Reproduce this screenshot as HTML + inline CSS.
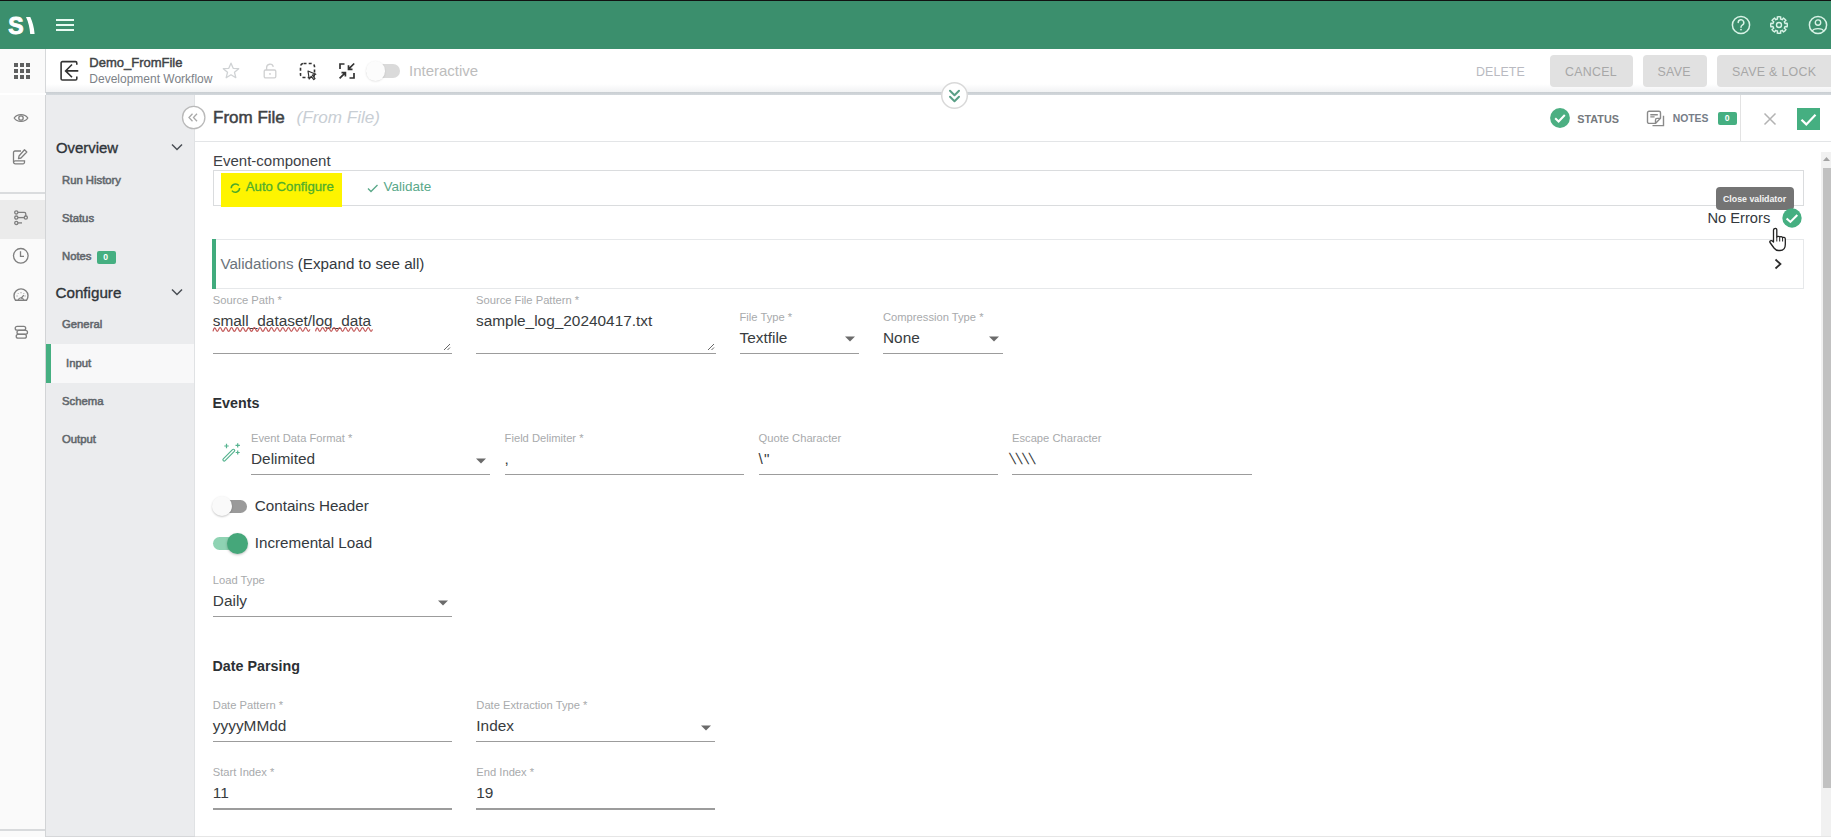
<!DOCTYPE html>
<html><head><meta charset="utf-8"><style>
html,body{margin:0;padding:0;width:1831px;height:837px;overflow:hidden;background:#fff;position:relative;}
.t{position:absolute;white-space:nowrap;line-height:1;font-family:"Liberation Sans",sans-serif;}
svg{overflow:visible}
</style></head><body>
<div style="position:absolute;left:0px;top:0px;width:1831px;height:49px;background:#3b8f6d"></div>
<div style="position:absolute;left:0px;top:0px;width:1831px;height:1.3px;background:#111"></div>
<div class="t" style="left:8.3px;top:14.53px;font-size:23px;color:#fff;font-weight:bold;font-style:normal;-webkit-text-stroke:0.9px #fff">S</div>
<svg style="position:absolute;left:24px;top:16px;" width="12" height="19" viewBox="0 0 12 19"><path d="M2 1 L6.3 1 C8.5 6 10 11 10.6 18 L6.2 18 C5.8 12 4.5 6 2 1 Z" fill="#fff"/></svg>
<div style="position:absolute;left:56px;top:19px;width:18px;height:2px;background:#e8fbf3"></div>
<div style="position:absolute;left:56px;top:24px;width:18px;height:2px;background:#e8fbf3"></div>
<div style="position:absolute;left:56px;top:29px;width:18px;height:2px;background:#e8fbf3"></div>
<svg style="position:absolute;left:1731px;top:15px;" width="20" height="20" viewBox="0 0 20 20"><circle cx="10" cy="10" r="8.6" fill="none" stroke="#d8f3e6" stroke-width="1.5"/><path d="M7.2 7.6 a2.8 2.8 0 1 1 4 2.5 c-0.9 0.5 -1.2 1 -1.2 2.2" fill="none" stroke="#d8f3e6" stroke-width="1.5" stroke-linecap="round"/><circle cx="10" cy="14.6" r="0.9" fill="#d8f3e6"/></svg>
<svg style="position:absolute;left:1769px;top:15px;transform:rotate(-90deg)" width="20" height="20" viewBox="0 0 20 20"><path d="M18.12 8.27 A8.3 8.3 0 0 1 18.12 11.73 L16.03 11.45 A6.2 6.2 0 0 1 15.29 13.24 L16.96 14.52 A8.3 8.3 0 0 1 14.52 16.96 L13.24 15.29 A6.2 6.2 0 0 1 11.45 16.03 L11.73 18.12 A8.3 8.3 0 0 1 8.27 18.12 L8.55 16.03 A6.2 6.2 0 0 1 6.76 15.29 L5.48 16.96 A8.3 8.3 0 0 1 3.04 14.52 L4.71 13.24 A6.2 6.2 0 0 1 3.97 11.45 L1.88 11.73 A8.3 8.3 0 0 1 1.88 8.27 L3.97 8.55 A6.2 6.2 0 0 1 4.71 6.76 L3.04 5.48 A8.3 8.3 0 0 1 5.48 3.04 L6.76 4.71 A6.2 6.2 0 0 1 8.55 3.97 L8.27 1.88 A8.3 8.3 0 0 1 11.73 1.88 L11.45 3.97 A6.2 6.2 0 0 1 13.24 4.71 L14.52 3.04 A8.3 8.3 0 0 1 16.96 5.48 L15.29 6.76 A6.2 6.2 0 0 1 16.03 8.55 Z" fill="none" stroke="#d8f3e6" stroke-width="1.4" stroke-linejoin="round"/><circle cx="10" cy="10" r="2.5" fill="none" stroke="#d8f3e6" stroke-width="1.4"/></svg>
<svg style="position:absolute;left:1808px;top:15px;" width="20" height="20" viewBox="0 0 20 20"><circle cx="10" cy="10" r="8.6" fill="none" stroke="#d8f3e6" stroke-width="1.5"/><circle cx="10" cy="7.6" r="2.7" fill="none" stroke="#d8f3e6" stroke-width="1.4"/><path d="M4.2 16.2 C5.5 12.8 14.5 12.8 15.8 16.2" fill="none" stroke="#d8f3e6" stroke-width="1.4"/></svg>
<div style="position:absolute;left:0px;top:49px;width:1831px;height:44px;background:#fff"></div>
<div style="position:absolute;left:46px;top:84px;width:1785px;height:8px;background:linear-gradient(#fff,#f1f2f3)"></div>
<div style="position:absolute;left:46px;top:92px;width:1785px;height:2.6px;background:linear-gradient(#c9ced2,#d3d8dc)"></div>
<div style="position:absolute;left:0px;top:92px;width:45px;height:1.3px;background:#d4d7da"></div>
<div style="position:absolute;left:0px;top:49px;width:45px;height:44px;background:#fafafa"></div>
<div style="position:absolute;left:45px;top:49px;width:1px;height:44px;background:#d6d8da"></div>
<div style="position:absolute;left:14px;top:63px;width:4px;height:4px;background:#5f6060"></div>
<div style="position:absolute;left:20px;top:63px;width:4px;height:4px;background:#5f6060"></div>
<div style="position:absolute;left:26px;top:63px;width:4px;height:4px;background:#5f6060"></div>
<div style="position:absolute;left:14px;top:69px;width:4px;height:4px;background:#5f6060"></div>
<div style="position:absolute;left:20px;top:69px;width:4px;height:4px;background:#5f6060"></div>
<div style="position:absolute;left:26px;top:69px;width:4px;height:4px;background:#5f6060"></div>
<div style="position:absolute;left:14px;top:75px;width:4px;height:4px;background:#5f6060"></div>
<div style="position:absolute;left:20px;top:75px;width:4px;height:4px;background:#5f6060"></div>
<div style="position:absolute;left:26px;top:75px;width:4px;height:4px;background:#5f6060"></div>
<svg style="position:absolute;left:59px;top:60px;" width="22" height="22" viewBox="0 0 22 22"><path d="M17.8 4.8 V2.9 a1.3 1.3 0 0 0 -1.3 -1.3 H3.4 a1.3 1.3 0 0 0 -1.3 1.3 V18.7 a1.3 1.3 0 0 0 1.3 1.3 H16.5 a1.3 1.3 0 0 0 1.3 -1.3 V16.4" fill="none" stroke="#333" stroke-width="1.6"/><path d="M19.3 10.9 H6.6 M13 4.5 L6.6 10.9 L13 17.3" fill="none" stroke="#333" stroke-width="1.6"/></svg>
<div class="t" style="left:89.3px;top:55.99px;font-size:13.0px;color:#3f4346;font-weight:normal;font-style:normal;-webkit-text-stroke:0.45px #3f4346">Demo_FromFile</div>
<div class="t" style="left:89.3px;top:72.54px;font-size:12.0px;color:#7d8288;font-weight:normal;font-style:normal;">Development Workflow</div>
<svg style="position:absolute;left:222px;top:62px;" width="18" height="17" viewBox="0 0 18 17"><path d="M9 1.2 L11.2 6.3 L16.7 6.7 L12.5 10.3 L13.8 15.7 L9 12.8 L4.2 15.7 L5.5 10.3 L1.3 6.7 L6.8 6.3 Z" fill="none" stroke="#cfd2d4" stroke-width="1.3" stroke-linejoin="round"/></svg>
<svg style="position:absolute;left:263px;top:63px;" width="15" height="16" viewBox="0 0 15 16"><rect x="1.2" y="7" width="11.6" height="7.8" rx="1.3" fill="none" stroke="#cfd0d1" stroke-width="1.3"/><path d="M3.6 7 V4.6 a3.4 3.4 0 0 1 6.7 -0.8" fill="none" stroke="#cfd0d1" stroke-width="1.3"/><circle cx="7" cy="10.9" r="0.9" fill="#cfd0d1"/></svg>
<svg style="position:absolute;left:298px;top:61px;" width="20" height="20" viewBox="0 0 20 20"><rect x="2.5" y="2.5" width="14" height="14" rx="3" fill="none" stroke="#333" stroke-width="1.6" stroke-dasharray="3 2.2"/><path d="M10 10 L17.8 13.2 L14.4 14.2 L17 17.6 L15.8 18.6 L13.2 15.3 L11.2 18 Z" fill="#fff" stroke="#333" stroke-width="1.2" stroke-linejoin="round"/></svg>
<svg style="position:absolute;left:338px;top:62px;" width="18" height="18" viewBox="0 0 18 18"><path d="M2 7 V2 H6.5 M11.5 16 H16 V11" fill="none" stroke="#333" stroke-width="1.7"/><path d="M16.2 1.5 L10.5 7.2 M10.5 3.2 V7.3 H14.5 M1.6 16.4 L7.4 10.6 M3.5 10.7 H7.4 V14.6" fill="none" stroke="#333" stroke-width="1.7"/></svg>
<div style="position:absolute;left:366px;top:64px;width:34px;height:13.6px;background:#dadada;border-radius:7px"></div>
<div style="position:absolute;left:365.5px;top:61px;width:19.5px;height:19.5px;background:#fcfcfc;border-radius:50%;box-shadow:0 0.5px 2px rgba(0,0,0,0.13)"></div>
<div class="t" style="left:409px;top:63.30px;font-size:15px;color:#bdbdbd;font-weight:normal;font-style:normal;">Interactive</div>
<div class="t" style="left:1476px;top:65.90px;font-size:12.4px;color:#b9bac1;font-weight:normal;font-style:normal;letter-spacing:0.1px">DELETE</div>
<div style="position:absolute;left:1550px;top:55px;width:83px;height:32px;background:#e1e1e1;border-radius:4px"></div>
<div class="t" style="left:1565px;top:65.90px;font-size:12.4px;color:#a7a7a7;font-weight:normal;font-style:normal;letter-spacing:0.3px">CANCEL</div>
<div style="position:absolute;left:1643px;top:55px;width:64px;height:32px;background:#e1e1e1;border-radius:4px"></div>
<div class="t" style="left:1657.5px;top:65.90px;font-size:12.4px;color:#a7a7a7;font-weight:normal;font-style:normal;letter-spacing:0.3px">SAVE</div>
<div style="position:absolute;left:1717px;top:55px;width:123px;height:32px;background:#e1e1e1;border-radius:4px"></div>
<div class="t" style="left:1732px;top:65.90px;font-size:12.4px;color:#a7a7a7;font-weight:normal;font-style:normal;letter-spacing:0.3px">SAVE &amp; LOCK</div>
<div style="position:absolute;left:0px;top:94.5px;width:45px;height:743px;background:#fafafa"></div>
<div style="position:absolute;left:45px;top:94.5px;width:1px;height:743px;background:#d2d4d6"></div>
<div style="position:absolute;left:0px;top:191.5px;width:45px;height:2px;background:#dadcde"></div>
<div style="position:absolute;left:0px;top:200px;width:45px;height:38.5px;background:#ebebeb"></div>
<div style="position:absolute;left:0px;top:829px;width:45px;height:1.5px;background:#d8dadc"></div>
<svg style="position:absolute;left:11px;top:110px;" width="20" height="16" viewBox="0 0 20 16"><path d="M3.2 8 C6.2 3.4 13.8 3.4 16.8 8 C13.8 12.6 6.2 12.6 3.2 8 Z" fill="none" stroke="#7f7f7f" stroke-width="1.3"/><circle cx="10" cy="8" r="2.2" fill="none" stroke="#7f7f7f" stroke-width="1.3"/></svg>
<svg style="position:absolute;left:12px;top:148px;" width="17" height="18" viewBox="0 0 17 18"><path d="M9 3 H3 a1.5 1.5 0 0 0 -1.5 1.5 V14 M1.5 14 a1.8 1.8 0 0 0 1.8 1.8 H11 a1.5 1.5 0 0 0 1.5 -1.5 V12.8 H3.3 a1.8 1.8 0 0 0 -1.8 1.2" fill="none" stroke="#7f7f7f" stroke-width="1.3"/><path d="M12.5 1.8 L14.8 4 L9 10 L6.5 10.6 L7 8 Z" fill="none" stroke="#7f7f7f" stroke-width="1.3" stroke-linejoin="round"/></svg>
<svg style="position:absolute;left:12px;top:208px;" width="18" height="18" viewBox="0 0 18 18"><circle cx="4.3" cy="4.4" r="1.6" fill="none" stroke="#7f7f7f" stroke-width="1.3"/><path d="M5.9 4.3 H12.2 a1.6 1.6 0 0 1 1.6 1.6 V7.9" fill="none" stroke="#7f7f7f" stroke-width="1.3"/><circle cx="4.3" cy="9.6" r="1.6" fill="none" stroke="#7f7f7f" stroke-width="1.3"/><circle cx="13.8" cy="9.6" r="1.6" fill="none" stroke="#7f7f7f" stroke-width="1.3"/><path d="M5.9 9.6 H12.2" stroke="#7f7f7f" stroke-width="1.3"/><circle cx="4.3" cy="14.9" r="1.6" fill="none" stroke="#7f7f7f" stroke-width="1.3"/><path d="M5.9 14.9 H10" stroke="#7f7f7f" stroke-width="1.3"/></svg>
<svg style="position:absolute;left:12px;top:247px;" width="18" height="18" viewBox="0 0 18 18"><circle cx="8.8" cy="8.8" r="7.3" fill="none" stroke="#7f7f7f" stroke-width="1.3"/><path d="M8.5 4.3 V9.3 H12" fill="none" stroke="#7f7f7f" stroke-width="1.3"/></svg>
<svg style="position:absolute;left:11px;top:288.3px;" width="20" height="15" viewBox="0 0 20 15"><path d="M4.5 12.2 A7 7 0 1 1 15.5 12.2 Z" fill="none" stroke="#7f7f7f" stroke-width="1.4" stroke-linejoin="round"/><path d="M7.3 11.8 A2.8 2.8 0 0 1 12.7 11.8" fill="none" stroke="#7f7f7f" stroke-width="1.2"/><path d="M10 10.5 L12.8 7.2" stroke="#7f7f7f" stroke-width="1.2"/><path d="M5.6 8 h0.9 M13.6 8 h0.9 M10 4.3 v0.9 M7 5.3 l0.5 0.6 M13 5.3 l-0.5 0.6" stroke="#7f7f7f" stroke-width="1"/></svg>
<svg style="position:absolute;left:13px;top:325px;" width="17" height="16" viewBox="0 0 17 16"><rect x="2.2" y="1.3" width="10.5" height="3.9" rx="1.95" fill="none" stroke="#7f7f7f" stroke-width="1.3"/><rect x="4" y="5.3" width="10.5" height="3.9" rx="1.95" fill="none" stroke="#7f7f7f" stroke-width="1.3"/><rect x="3.2" y="9.3" width="10.2" height="3.9" rx="1.95" fill="none" stroke="#7f7f7f" stroke-width="1.3"/></svg>
<div style="position:absolute;left:46px;top:94.5px;width:149px;height:743px;background:#ebecee"></div>
<div style="position:absolute;left:194px;top:94.5px;width:1px;height:743px;background:#e0e2e4"></div>
<div class="t" style="left:56px;top:141.18px;font-size:14.9px;color:#2f3439;font-weight:normal;font-style:normal;-webkit-text-stroke:0.35px #2f3439">Overview</div>
<svg style="position:absolute;left:170px;top:142px;" width="14" height="10" viewBox="0 0 14 10"><path d="M2 2.5 L7 7.5 L12 2.5" fill="none" stroke="#4a4f54" stroke-width="1.5"/></svg>
<div class="t" style="left:62px;top:174.73px;font-size:11.3px;color:#62676c;font-weight:normal;font-style:normal;-webkit-text-stroke:0.55px #62676c">Run History</div>
<div class="t" style="left:62px;top:212.73px;font-size:11.3px;color:#62676c;font-weight:normal;font-style:normal;-webkit-text-stroke:0.55px #62676c">Status</div>
<div class="t" style="left:62px;top:250.83px;font-size:11.3px;color:#62676c;font-weight:normal;font-style:normal;-webkit-text-stroke:0.55px #62676c">Notes</div>
<div style="position:absolute;left:96.5px;top:250.5px;width:19px;height:13px;background:#45af81;border-radius:2px"></div>
<div class="t" style="left:103.3px;top:253.02px;font-size:8.6px;color:#fff;font-weight:bold;font-style:normal;">0</div>
<div class="t" style="left:55.5px;top:285.33px;font-size:15.2px;color:#2f3439;font-weight:normal;font-style:normal;-webkit-text-stroke:0.35px #2f3439">Configure</div>
<svg style="position:absolute;left:170px;top:287px;" width="14" height="10" viewBox="0 0 14 10"><path d="M2 2.5 L7 7.5 L12 2.5" fill="none" stroke="#4a4f54" stroke-width="1.5"/></svg>
<div class="t" style="left:62px;top:319.13px;font-size:11.3px;color:#62676c;font-weight:normal;font-style:normal;-webkit-text-stroke:0.55px #62676c">General</div>
<div style="position:absolute;left:46px;top:344px;width:148px;height:38.5px;background:#f8f8f9"></div>
<div style="position:absolute;left:46px;top:344px;width:5px;height:38.5px;background:#45af81"></div>
<div class="t" style="left:66px;top:357.83px;font-size:11.3px;color:#62676c;font-weight:normal;font-style:normal;-webkit-text-stroke:0.55px #62676c">Input</div>
<div class="t" style="left:62px;top:395.83px;font-size:11.3px;color:#62676c;font-weight:normal;font-style:normal;-webkit-text-stroke:0.55px #62676c">Schema</div>
<div class="t" style="left:62px;top:434.43px;font-size:11.3px;color:#62676c;font-weight:normal;font-style:normal;-webkit-text-stroke:0.55px #62676c">Output</div>
<div style="position:absolute;left:195px;top:94.5px;width:1636px;height:47px;background:#fff"></div>
<div style="position:absolute;left:195px;top:140.5px;width:1636px;height:1.5px;background:#e3e5e7"></div>
<svg style="position:absolute;left:181px;top:105px;" width="26" height="26" viewBox="0 0 26 26"><circle cx="12.7" cy="12.5" r="11.2" fill="#fff" stroke="#b9b9b9" stroke-width="1.3"/><path d="M11.5 8.8 L8 12.5 L11.5 16.2 M16 8.8 L12.5 12.5 L16 16.2" fill="none" stroke="#a9a9a9" stroke-width="1.3"/></svg>
<div class="t" style="left:213px;top:108.61px;font-size:17px;color:#3e4245;font-weight:normal;font-style:normal;-webkit-text-stroke:0.5px #3e4245">From File</div>
<div class="t" style="left:296.5px;top:108.52px;font-size:17.1px;color:#c8ced4;font-weight:normal;font-style:italic;">(From File)</div>
<svg style="position:absolute;left:1549px;top:107px;" width="22" height="22" viewBox="0 0 22 22"><circle cx="11" cy="11" r="9.9" fill="#4caf82"/><path d="M6.2 11.2 L9.6 14.5 L15.8 8" fill="none" stroke="#fff" stroke-width="2"/></svg>
<div class="t" style="left:1577.3px;top:113.86px;font-size:10.8px;color:#75797d;font-weight:bold;font-style:normal;">STATUS</div>
<svg style="position:absolute;left:1646px;top:110px;" width="19" height="18" viewBox="0 0 19 18"><path d="M1.5 2.8 a1.5 1.5 0 0 1 1.5 -1.5 H13 a1.5 1.5 0 0 1 1.5 1.5 V8.3 L9.4 13.4 H3 a1.5 1.5 0 0 1 -1.5 -1.5 Z" fill="none" stroke="#8a8a8a" stroke-width="1.4" stroke-linejoin="round"/><path d="M14.5 8.4 H11 a1.5 1.5 0 0 0 -1.5 1.5 V13.4" fill="none" stroke="#8a8a8a" stroke-width="1.4"/><path d="M4.3 4.8 H11.8 M4.3 6.9 H8.6" stroke="#8a8a8a" stroke-width="1.4"/><path d="M17.5 5.8 V15.6 H6.5" fill="none" stroke="#8a8a8a" stroke-width="1.4"/></svg>
<div class="t" style="left:1672.7px;top:114.19px;font-size:10.4px;color:#767d88;font-weight:bold;font-style:normal;">NOTES</div>
<div style="position:absolute;left:1718px;top:111.5px;width:19px;height:13px;background:#45af81;border-radius:2px"></div>
<div class="t" style="left:1724.8px;top:114.22px;font-size:8.6px;color:#fff;font-weight:bold;font-style:normal;">0</div>
<div style="position:absolute;left:1740px;top:95px;width:1.3px;height:46px;background:#e3e3e3"></div>
<svg style="position:absolute;left:1762px;top:111px;" width="16" height="16" viewBox="0 0 16 16"><path d="M2.5 2.5 L13.5 13.5 M13.5 2.5 L2.5 13.5" stroke="#b3b3b3" stroke-width="1.5"/></svg>
<div style="position:absolute;left:1797px;top:107.5px;width:22.5px;height:22.7px;background:#45af81"></div>
<svg style="position:absolute;left:1797px;top:107.5px;" width="23" height="23" viewBox="0 0 23 23"><path d="M4.5 11.8 L9.3 16.4 L18.5 6.8" fill="none" stroke="#fff" stroke-width="2.2"/></svg>
<div class="t" style="left:213px;top:153.00px;font-size:15px;color:#3d4146;font-weight:normal;font-style:normal;">Event-component</div>
<div style="position:absolute;left:212.5px;top:170px;width:1591px;height:36px;border:1.3px solid #dadcde;box-sizing:border-box;background:#fff"></div>
<div style="position:absolute;left:221px;top:173px;width:120.5px;height:34px;background:#fef400"></div>
<svg style="position:absolute;left:230px;top:183px;" width="11" height="11" viewBox="0 0 11 11"><path d="M8.8 2.6 A4.3 4.3 0 0 0 1.2 5.2 M1.9 7.6 A4.3 4.3 0 0 0 9.6 5" fill="none" stroke="#4aa82a" stroke-width="1.5"/></svg>
<div class="t" style="left:245.8px;top:180.22px;font-size:13.2px;color:#4fae2c;font-weight:normal;font-style:normal;-webkit-text-stroke:0.3px #4fae2c">Auto Configure</div>
<svg style="position:absolute;left:366px;top:182px;" width="14" height="12" viewBox="0 0 14 12"><path d="M2 6.5 L5 9.5 L11.5 3" fill="none" stroke="#5ca98a" stroke-width="1.4"/></svg>
<div class="t" style="left:383.6px;top:179.97px;font-size:13.5px;color:#59a889;font-weight:normal;font-style:normal;">Validate</div>
<div style="position:absolute;left:1715.5px;top:187px;width:78.5px;height:23px;background:#747474;border-radius:4px"></div>
<div class="t" style="left:1723px;top:195.05px;font-size:8.8px;color:#f4f4f4;font-weight:bold;font-style:normal;">Close validator</div>
<div class="t" style="left:1707.4px;top:210.75px;font-size:14.7px;color:#33383d;font-weight:normal;font-style:normal;">No Errors</div>
<svg style="position:absolute;left:1781px;top:207px;" width="22" height="22" viewBox="0 0 22 22"><circle cx="11" cy="11" r="9.7" fill="#45af81"/><path d="M5.6 11.4 L9.4 14.9 L16.3 7.9" fill="none" stroke="#fff" stroke-width="2.1"/></svg>
<div style="position:absolute;left:212.5px;top:239px;width:1591px;height:50px;border:1.3px solid #e6e8ea;border-left:none;box-sizing:border-box;background:#fff"></div>
<div style="position:absolute;left:212px;top:239px;width:3.5px;height:49.5px;background:#41ab7d"></div>
<div class="t" style="left:220.4px;top:255.93px;font-size:15.2px;color:#34393e;font-weight:normal;font-style:normal;"><span style="color:#6b737b">Validations</span> (Expand to see all)</div>
<svg style="position:absolute;left:1772px;top:257px;" width="12" height="14" viewBox="0 0 12 14"><path d="M3.5 2.5 L8.5 7 L3.5 11.5" fill="none" stroke="#2b2b2b" stroke-width="1.7"/></svg>
<svg style="position:absolute;left:1766px;top:226px;" width="24" height="28" viewBox="0 0 24 28"><path d="M9 2.5 C10.3 2.3 10.8 3 10.8 4 V11 C11 10.2 13.5 10 13.7 11.2 C14 10.4 16.4 10.4 16.6 11.8 C17 11.1 19.3 11.3 19.3 12.8 V18.5 C19.3 22 17.5 24.5 14 24.5 H12.5 C10.5 24.5 9.3 23.7 8 22 L4 16.5 C3.3 15.5 4.5 14 6 14.8 L7.5 16 V4 C7.5 3 8 2.6 9 2.5 Z" fill="#fff" stroke="#222" stroke-width="1.3" stroke-linejoin="round"/><path d="M10.8 11 V15.5 M13.7 11.5 V15.5 M16.6 12 V15.5" stroke="#222" stroke-width="1"/></svg>
<div class="t" style="left:212.8px;top:294.92px;font-size:11.2px;color:#a8aaac;font-weight:normal;font-style:normal;">Source Path *</div>
<div class="t" style="left:212.8px;top:313.06px;font-size:15.4px;color:#383c40;font-weight:normal;font-style:normal;">small_dataset/log_data</div>
<div style="position:absolute;left:212.8px;top:352.59999999999997px;width:239.5px;height:1.6px;background:#9c9c9c"></div>
<svg style="position:absolute;left:443.3px;top:343.4px;" width="8" height="8" viewBox="0 0 8 8"><path d="M7 1 L1 7 M7 4.5 L4.5 7" stroke="#666" stroke-width="1"/></svg>
<svg style="position:absolute;left:0px;top:0px;pointer-events:none" width="1831" height="837" viewBox="0 0 1831 837"><path d="M213.00 331.30 Q214.43 325.70 215.85 329.40 Q217.28 333.10 218.70 329.40 Q220.12 325.70 221.55 329.40 Q222.97 333.10 224.40 329.40 Q225.82 325.70 227.25 329.40 Q228.67 333.10 230.10 329.40 Q231.52 325.70 232.95 329.40 Q234.37 333.10 235.80 329.40 Q237.22 325.70 238.65 329.40 Q240.07 333.10 241.50 329.40 Q242.92 325.70 244.35 329.40 Q245.77 333.10 247.20 329.40 Q248.62 325.70 250.05 329.40 Q251.47 333.10 252.90 329.40 Q254.32 325.70 255.75 329.40 Q257.17 333.10 258.60 329.40 Q260.02 325.70 261.45 329.40 Q262.87 333.10 264.30 329.40 Q265.72 325.70 267.15 329.40 Q268.57 333.10 270.00 329.40 Q271.43 325.70 272.85 329.40 Q274.28 333.10 275.70 329.40 Q277.13 325.70 278.55 329.40 Q279.98 333.10 281.40 329.40 Q282.83 325.70 284.25 329.40 Q285.68 333.10 287.10 329.40 Q288.53 325.70 289.95 329.40 Q291.38 333.10 292.80 329.40 Q294.23 325.70 295.65 329.40 Q297.08 333.10 298.50 329.40 Q299.93 325.70 301.35 329.40 Q302.78 333.10 304.20 329.40 Q305.63 325.70 307.05 329.40 Q308.48 333.10 309.90 329.40" fill="none" stroke="#c45c5c" stroke-width="1.25"/></svg>
<svg style="position:absolute;left:0px;top:0px;pointer-events:none" width="1831" height="837" viewBox="0 0 1831 837"><path d="M315.50 331.30 Q316.93 325.70 318.35 329.40 Q319.78 333.10 321.20 329.40 Q322.63 325.70 324.05 329.40 Q325.48 333.10 326.90 329.40 Q328.33 325.70 329.75 329.40 Q331.18 333.10 332.60 329.40 Q334.03 325.70 335.45 329.40 Q336.88 333.10 338.30 329.40 Q339.73 325.70 341.15 329.40 Q342.58 333.10 344.00 329.40 Q345.43 325.70 346.85 329.40 Q348.28 333.10 349.70 329.40 Q351.13 325.70 352.55 329.40 Q353.98 333.10 355.40 329.40 Q356.83 325.70 358.25 329.40 Q359.68 333.10 361.10 329.40 Q362.53 325.70 363.95 329.40 Q365.38 333.10 366.80 329.40 Q368.23 325.70 369.65 329.40 Q371.08 333.10 372.50 329.40" fill="none" stroke="#c45c5c" stroke-width="1.25"/></svg>
<div class="t" style="left:476px;top:294.92px;font-size:11.2px;color:#a8aaac;font-weight:normal;font-style:normal;">Source File Pattern *</div>
<div class="t" style="left:476px;top:313.06px;font-size:15.4px;color:#383c40;font-weight:normal;font-style:normal;">sample_log_20240417.txt</div>
<div style="position:absolute;left:476px;top:352.59999999999997px;width:239.5px;height:1.6px;background:#9c9c9c"></div>
<svg style="position:absolute;left:706.5px;top:343.4px;" width="8" height="8" viewBox="0 0 8 8"><path d="M7 1 L1 7 M7 4.5 L4.5 7" stroke="#666" stroke-width="1"/></svg>
<div class="t" style="left:739.5px;top:312.42px;font-size:11.2px;color:#a8aaac;font-weight:normal;font-style:normal;">File Type *</div>
<div class="t" style="left:739.5px;top:329.96px;font-size:15.4px;color:#383c40;font-weight:normal;font-style:normal;">Textfile</div>
<div style="position:absolute;left:739.5px;top:352.59999999999997px;width:119.5px;height:1.6px;background:#9c9c9c"></div>
<svg style="position:absolute;left:844.0px;top:335px;" width="12" height="8" viewBox="0 0 12 8"><path d="M1 1.5 H11 L6 6.5 Z" fill="#6b6b6b"/></svg>
<div class="t" style="left:883px;top:312.42px;font-size:11.2px;color:#a8aaac;font-weight:normal;font-style:normal;">Compression Type *</div>
<div class="t" style="left:883px;top:329.96px;font-size:15.4px;color:#383c40;font-weight:normal;font-style:normal;">None</div>
<div style="position:absolute;left:883px;top:352.59999999999997px;width:119.5px;height:1.6px;background:#9c9c9c"></div>
<svg style="position:absolute;left:987.5px;top:335px;" width="12" height="8" viewBox="0 0 12 8"><path d="M1 1.5 H11 L6 6.5 Z" fill="#6b6b6b"/></svg>
<div class="t" style="left:212.5px;top:395.59px;font-size:14.3px;color:#2c3034;font-weight:bold;font-style:normal;">Events</div>
<svg style="position:absolute;left:219px;top:441px;" width="22" height="22" viewBox="0 0 22 22"><path d="M4.3 17.8 L13.5 8.6 a1.2 1.2 0 0 1 1.8 1.8 L6.1 19.6 a1.2 1.2 0 0 1 -1.8 -1.8 Z" fill="none" stroke="#55b38f" stroke-width="1.2"/><path d="M7.5 2.8 v4.4 M5.3 5 h4.4 M18.7 2.2 v4.4 M16.5 4.4 h4.4 M18.7 9.5 v4 M16.7 11.5 h4" stroke="#55b38f" stroke-width="1.2"/></svg>
<div class="t" style="left:251px;top:432.72px;font-size:11.2px;color:#a8aaac;font-weight:normal;font-style:normal;">Event Data Format *</div>
<div class="t" style="left:251px;top:451.46px;font-size:15.4px;color:#383c40;font-weight:normal;font-style:normal;">Delimited</div>
<div style="position:absolute;left:251px;top:473.59999999999997px;width:239px;height:1.6px;background:#9c9c9c"></div>
<svg style="position:absolute;left:475px;top:456.5px;" width="12" height="8" viewBox="0 0 12 8"><path d="M1 1.5 H11 L6 6.5 Z" fill="#6b6b6b"/></svg>
<div class="t" style="left:504.6px;top:432.72px;font-size:11.2px;color:#a8aaac;font-weight:normal;font-style:normal;">Field Delimiter *</div>
<div class="t" style="left:504.6px;top:451.46px;font-size:15.4px;color:#383c40;font-weight:normal;font-style:normal;">,</div>
<div style="position:absolute;left:504.6px;top:473.59999999999997px;width:239px;height:1.6px;background:#9c9c9c"></div>
<div class="t" style="left:758.5px;top:432.72px;font-size:11.2px;color:#a8aaac;font-weight:normal;font-style:normal;">Quote Character</div>
<div class="t" style="left:758.5px;top:451.46px;font-size:15.4px;color:#383c40;font-weight:normal;font-style:normal;letter-spacing:1.2px">\&quot;</div>
<div style="position:absolute;left:758.5px;top:473.59999999999997px;width:239px;height:1.6px;background:#9c9c9c"></div>
<div class="t" style="left:1012px;top:432.72px;font-size:11.2px;color:#a8aaac;font-weight:normal;font-style:normal;">Escape Character</div>
<div class="t" style="left:1012px;top:451.46px;font-size:15.4px;color:#383c40;font-weight:normal;font-style:normal;letter-spacing:2.2px;transform:skewX(16deg);transform-origin:0 85%">\\\\</div>
<div style="position:absolute;left:1012px;top:473.59999999999997px;width:239.7px;height:1.6px;background:#9c9c9c"></div>
<div style="position:absolute;left:213px;top:499.5px;width:34px;height:13.5px;background:#9a9a9a;border-radius:7px"></div>
<div style="position:absolute;left:212.3px;top:495.5px;width:20px;height:20px;background:#fafafa;border-radius:50%;box-shadow:0 1px 2px rgba(0,0,0,0.22)"></div>
<div class="t" style="left:254.8px;top:498.13px;font-size:15.2px;color:#34393e;font-weight:normal;font-style:normal;">Contains Header</div>
<div style="position:absolute;left:213px;top:536.5px;width:34px;height:13.5px;background:#8fd3b3;border-radius:7px"></div>
<div style="position:absolute;left:227px;top:533px;width:21px;height:21px;background:#45a77a;border-radius:50%;box-shadow:0 1px 2.5px rgba(0,0,0,0.25)"></div>
<div class="t" style="left:254.8px;top:534.93px;font-size:15.2px;color:#34393e;font-weight:normal;font-style:normal;">Incremental Load</div>
<div class="t" style="left:212.8px;top:575.22px;font-size:11.2px;color:#a8aaac;font-weight:normal;font-style:normal;">Load Type</div>
<div class="t" style="left:212.8px;top:593.46px;font-size:15.4px;color:#383c40;font-weight:normal;font-style:normal;">Daily</div>
<div style="position:absolute;left:212.8px;top:615.5px;width:239.5px;height:1.6px;background:#9c9c9c"></div>
<svg style="position:absolute;left:437.3px;top:598.5px;" width="12" height="8" viewBox="0 0 12 8"><path d="M1 1.5 H11 L6 6.5 Z" fill="#6b6b6b"/></svg>
<div class="t" style="left:212.5px;top:658.69px;font-size:14.3px;color:#2c3034;font-weight:bold;font-style:normal;">Date Parsing</div>
<div class="t" style="left:212.8px;top:700.22px;font-size:11.2px;color:#a8aaac;font-weight:normal;font-style:normal;">Date Pattern *</div>
<div class="t" style="left:212.8px;top:718.46px;font-size:15.4px;color:#383c40;font-weight:normal;font-style:normal;">yyyyMMdd</div>
<div style="position:absolute;left:212.8px;top:740.5px;width:239.5px;height:1.6px;background:#9c9c9c"></div>
<div class="t" style="left:476.3px;top:700.22px;font-size:11.2px;color:#a8aaac;font-weight:normal;font-style:normal;">Date Extraction Type *</div>
<div class="t" style="left:476.3px;top:718.46px;font-size:15.4px;color:#383c40;font-weight:normal;font-style:normal;">Index</div>
<div style="position:absolute;left:476.3px;top:740.5px;width:239px;height:1.6px;background:#9c9c9c"></div>
<svg style="position:absolute;left:700.3px;top:723.5px;" width="12" height="8" viewBox="0 0 12 8"><path d="M1 1.5 H11 L6 6.5 Z" fill="#6b6b6b"/></svg>
<div class="t" style="left:212.8px;top:767.22px;font-size:11.2px;color:#a8aaac;font-weight:normal;font-style:normal;">Start Index *</div>
<div class="t" style="left:212.8px;top:785.46px;font-size:15.4px;color:#383c40;font-weight:normal;font-style:normal;">11</div>
<div style="position:absolute;left:212.8px;top:808.0px;width:239.5px;height:1.6px;background:#9c9c9c"></div>
<div class="t" style="left:476.3px;top:767.22px;font-size:11.2px;color:#a8aaac;font-weight:normal;font-style:normal;">End Index *</div>
<div class="t" style="left:476.3px;top:785.46px;font-size:15.4px;color:#383c40;font-weight:normal;font-style:normal;">19</div>
<div style="position:absolute;left:476.3px;top:808.0px;width:239px;height:1.6px;background:#9c9c9c"></div>
<svg style="position:absolute;left:940px;top:81px;" width="29" height="29" viewBox="0 0 29 29"><circle cx="14.5" cy="14.5" r="12.8" fill="#fff" stroke="#d9d9d9" stroke-width="1.5"/><path d="M10 9.8 L14.5 14.3 L19 9.8 M10 15.8 L14.5 20.3 L19 15.8" fill="none" stroke="#5a9f86" stroke-width="2" stroke-linecap="round" stroke-linejoin="round"/></svg>
<div style="position:absolute;left:1821px;top:151.5px;width:10px;height:686px;background:#f1f1f1"></div>
<div style="position:absolute;left:1822.5px;top:168px;width:8.5px;height:620px;background:#c1c1c1"></div>
<svg style="position:absolute;left:1822px;top:154px;" width="9" height="10" viewBox="0 0 9 10"><path d="M1 7 L4.5 3 L8 7 Z" fill="#a3a3a3"/></svg>
<div style="position:absolute;left:195px;top:835.5px;width:1636px;height:1.5px;background:#e6e6e6"></div>
<div style="position:absolute;left:46px;top:835.5px;width:149px;height:1.5px;background:#d6d7d9"></div>
</body></html>
